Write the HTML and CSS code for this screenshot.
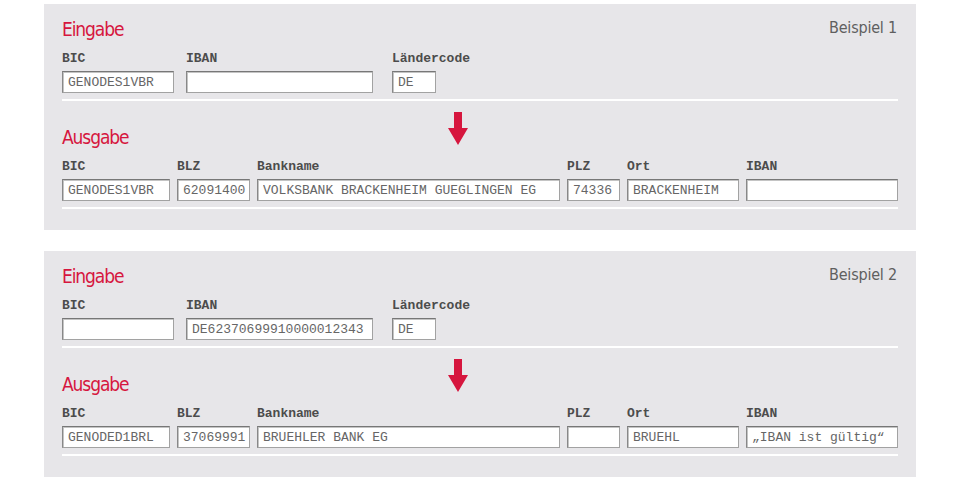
FILE: index.html
```html
<!DOCTYPE html>
<html lang="de">
<head>
  <meta charset="UTF-8" />
  <title>BIC / IBAN Beispiele</title>
  <link rel="stylesheet" href="styles.css">
</head>
<body>
  <section class="example">
    <div class="head">
      <h2>Eingabe</h2>
      <span class="tag">Beispiel 1</span>
    </div>
    <div class="row row-in">
      <label class="field w-bic"><span>BIC</span><input type="text" value="GENODES1VBR" readonly></label>
      <label class="field w-iban"><span>IBAN</span><input type="text" value="" readonly></label>
      <label class="field w-lc"><span>Ländercode</span><input type="text" value="DE" readonly></label>
    </div>
    <div class="sep"></div>

    <div class="head out">
      <h2>Ausgabe</h2>
      <svg class="arrow" width="20" height="33" viewBox="0 0 20 33"><path d="M6 0h8v16h6L10 33 0 16h6z" fill="#d6163e"/></svg>
    </div>
    <div class="row row-out">
      <label class="field o-bic"><span>BIC</span><input type="text" value="GENODES1VBR" readonly></label>
      <label class="field o-blz"><span>BLZ</span><input type="text" value="62091400" readonly></label>
      <label class="field o-name"><span>Bankname</span><input type="text" value="VOLKSBANK BRACKENHEIM GUEGLINGEN EG" readonly></label>
      <label class="field o-plz"><span>PLZ</span><input type="text" value="74336" readonly></label>
      <label class="field o-ort"><span>Ort</span><input type="text" value="BRACKENHEIM" readonly></label>
      <label class="field o-iban"><span>IBAN</span><input type="text" value="" readonly></label>
    </div>
    <div class="sep"></div>
  </section>

  <section class="example">
    <div class="head">
      <h2>Eingabe</h2>
      <span class="tag">Beispiel 2</span>
    </div>
    <div class="row row-in">
      <label class="field w-bic"><span>BIC</span><input type="text" value="" readonly></label>
      <label class="field w-iban"><span>IBAN</span><input type="text" value="DE62370699910000012343" readonly></label>
      <label class="field w-lc"><span>Ländercode</span><input type="text" value="DE" readonly></label>
    </div>
    <div class="sep"></div>

    <div class="head out">
      <h2>Ausgabe</h2>
      <svg class="arrow" width="20" height="33" viewBox="0 0 20 33"><path d="M6 0h8v16h6L10 33 0 16h6z" fill="#d6163e"/></svg>
    </div>
    <div class="row row-out">
      <label class="field o-bic"><span>BIC</span><input type="text" value="GENODED1BRL" readonly></label>
      <label class="field o-blz"><span>BLZ</span><input type="text" value="37069991" readonly></label>
      <label class="field o-name"><span>Bankname</span><input type="text" value="BRUEHLER BANK EG" readonly></label>
      <label class="field o-plz"><span>PLZ</span><input type="text" value="" readonly></label>
      <label class="field o-ort"><span>Ort</span><input type="text" value="BRUEHL" readonly></label>
      <label class="field o-iban"><span>IBAN</span><input type="text" value="„IBAN ist gültig“" readonly></label>
    </div>
    <div class="sep"></div>
  </section>
</body>
</html>
```
FILE: styles.css
```css
body {
  margin: 0;
  background-color: #fff;
  font-family: "DejaVu Sans", sans-serif;
}
.example {
  width: 872px;
  margin: 4px 0 0 44px;
  padding: 13px 18px 21px;
  box-sizing: border-box;
  background-color: #e7e6e9;
}
.example + .example {
  margin-top: 21px;
}
.head {
  display: flex;
  justify-content: space-between;
  align-items: flex-start;
}
.head h2 {
  margin: 0;
  font-size: 19px;
  line-height: 24px;
  font-weight: normal;
  font-stretch: condensed;
  letter-spacing: -1.1px;
  color: #d6163e;
}
.tag {
  font-size: 16px;
  line-height: 20px;
  font-stretch: condensed;
  letter-spacing: -0.2px;
  color: #5f5f5f;
  margin-top: 1px;
  margin-right: 1px;
}
.head.out {
  justify-content: flex-start;
  align-items: flex-end;
  margin-top: 11px;
}
.head.out h2 {
  width: 386px;
}
.arrow {
  display: block;
  margin-bottom: 4px;
}
.row {
  display: flex;
  margin-top: 10px;
}
.row-in {
  gap: 12px;
}
.row-out {
  gap: 7px;
}
.field {
  display: flex;
  flex-direction: column;
}
.field span {
  font-family: "Liberation Mono", monospace;
  font-weight: bold;
  font-size: 13px;
  line-height: 15px;
  color: #4c4c4c;
  margin-bottom: 5px;
}
.field input {
  box-sizing: border-box;
  width: 100%;
  height: 22px;
  margin: 0;
  padding: 0 0 0 5px;
  font-family: "Liberation Mono", monospace;
  font-size: 13px;
  color: #666;
  background-color: #fff;
  border: 1px solid #a2a2a2;
  border-top-color: #777;
  border-left-color: #888;
  box-shadow: inset 1px 1px 0 #c4c4c4;
  outline: none;
}
.w-bic { width: 112px; }
.w-iban { width: 187px; }
.w-lc { width: 44px; margin-left: 7px; }
.o-bic { width: 108px; }
.o-blz { width: 73px; }
.o-name { width: 303px; }
.o-plz { width: 53px; }
.o-ort { width: 112px; }
.o-iban { width: 152px; }
.sep {
  height: 2px;
  margin-top: 6px;
  background-color: #fff;
}
```
